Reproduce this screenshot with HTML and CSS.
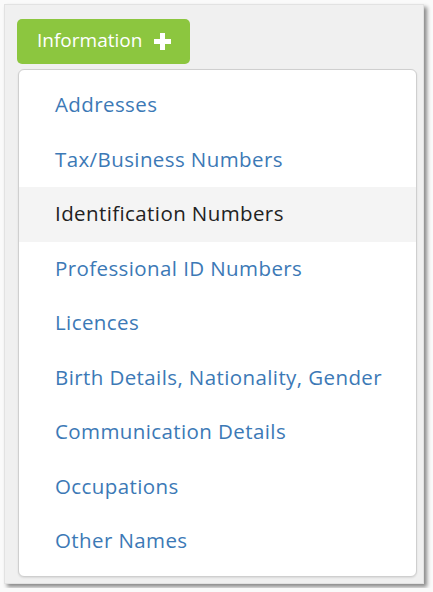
FILE: index.html
```html
<!DOCTYPE html>
<html lang="en">
<head>
<meta charset="UTF-8" />
<meta name="viewport" content="width=device-width, initial-scale=1" />
<title>Information</title>
<link rel="stylesheet" href="styles.css">
</head>
<body>

<div class="panel">
  <button class="info-btn">
    <span>Information</span>
    <svg class="plus" width="17" height="17" viewBox="0 0 17 17">
      <rect x="6" y="0" width="5" height="17" fill="#fff" />
      <rect x="0" y="6" width="17" height="5" fill="#fff" />
    </svg>
  </button>
  <ul class="dropdown">
    <li><a href="#">Addresses</a></li>
    <li><a href="#">Tax/Business Numbers</a></li>
    <li class="hover"><a href="#">Identification Numbers</a></li>
    <li><a href="#">Professional ID Numbers</a></li>
    <li><a href="#">Licences</a></li>
    <li><a href="#">Birth Details, Nationality, Gender</a></li>
    <li><a href="#">Communication Details</a></li>
    <li><a href="#">Occupations</a></li>
    <li><a href="#">Other Names</a></li>
  </ul>
</div>

</body>
</html>
```

FILE: styles.css
```css
body {
  margin: 0; background: #fafafa;
  font-family: "Open Sans", Lato, sans-serif;
}
.panel {
  margin: 4px; width: 420px; height: 580px; box-sizing: border-box;
  background: #f0f0f0; border: 1px solid #e2e2e2;
  box-shadow: 3px 3px 4px rgba(0, 0, 0, 0.45);
  padding: 14px 0 0 12px;
  display: flex; flex-direction: column; align-items: flex-start;
}
.info-btn {
  width: 173px; height: 45px; border: none; border-radius: 5px;
  background: #8cc63f; color: #fff; font-family: inherit; font-size: 19px;
  display: flex; align-items: center; gap: 12px; padding: 0 0 0 20px;
  cursor: pointer;
}
.info-btn span {
  position: relative; top: -2px;
}
.plus {
  display: block;
}
.dropdown {
  list-style: none; margin: 5px 0 0 1px; padding: 8px 0 0 0;
  width: 399px; height: 508px; box-sizing: border-box;
  background: #fff; border: 1px solid #cfcfcf; border-radius: 6px;
  box-shadow: 0 1px 2px rgba(0, 0, 0, 0.1);
}
.dropdown li a {
  display: block; padding: 15px 0 17px 36px; line-height: 22.5px;
  font-size: 20.5px; letter-spacing: 0.4px; color: #3c79b6; text-decoration: none;
}
.dropdown li.hover {
  background: #f4f4f4;
}
.dropdown li.hover a {
  color: #222;
}
```
